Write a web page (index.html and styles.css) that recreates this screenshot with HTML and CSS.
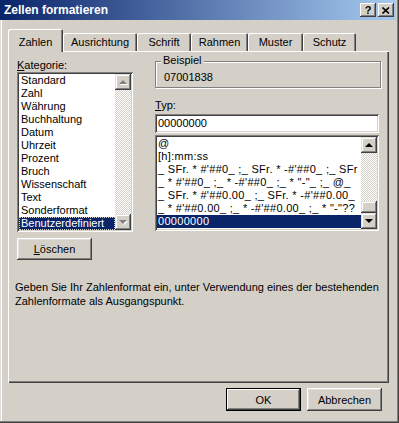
FILE: index.html
```html
<!DOCTYPE html>
<html lang="de">
<head>
    <meta charset="UTF-8">
    <title>Zellen formatieren</title>
    <link rel="stylesheet" href="styles.css">
</head>
<body>
    <div class="window">
        <!-- Title bar -->
        <div class="titlebar">
            <span class="title">Zellen formatieren</span>
            <div class="caption-buttons">
                <span class="caption-btn help">?</span>
                <span class="caption-btn close">
                    <svg width="8" height="7" viewBox="0 0 8 7"><path d="M0.5 0.5 L7 6.5 M7 0.5 L0.5 6.5" stroke="#000" stroke-width="1.6" fill="none"/></svg>
                </span>
            </div>
        </div>

        <!-- Tabs -->
        <div class="tabs">
            <div class="tab active tab-zahlen">Zahlen</div>
            <div class="tab tab-ausrichtung">Ausrichtung</div>
            <div class="tab tab-schrift">Schrift</div>
            <div class="tab tab-rahmen">Rahmen</div>
            <div class="tab tab-muster">Muster</div>
            <div class="tab tab-schutz">Schutz</div>
        </div>

        <div class="panel">
            <div class="panel-row">
                <div class="col-left">
                    <div class="label"><u>K</u>ategorie:</div>
                    <div class="listbox category">
                        <ul class="items">
                            <li>Standard</li>
                            <li>Zahl</li>
                            <li>Währung</li>
                            <li>Buchhaltung</li>
                            <li>Datum</li>
                            <li>Uhrzeit</li>
                            <li>Prozent</li>
                            <li>Bruch</li>
                            <li>Wissenschaft</li>
                            <li>Text</li>
                            <li>Sonderformat</li>
                            <li class="selected focused">Benutzerdefiniert</li>
                        </ul>
                        <div class="scrollbar disabled">
                            <div class="arrow up"></div>
                            <div class="track"></div>
                            <div class="arrow down"></div>
                        </div>
                    </div>
                    <div class="button clear"><span><u>L</u>öschen</span></div>
                </div>

                <div class="col-right">
                    <div class="group">
                        <div class="group-label">Beispiel</div>
                        <div class="sample">07001838</div>
                    </div>
                    <div class="label typ"><u>T</u>yp:</div>
                    <div class="textbox">00000000</div>
                    <div class="listbox formats">
                        <ul class="items">
                            <li>@</li>
                            <li>[h]:mm:ss</li>
                            <li>_ SFr. * #'##0_ ;_ SFr. * -#'##0_ ;_ SFr</li>
                            <li>_ * #'##0_ ;_ * -#'##0_ ;_ * "-"_ ;_ @_</li>
                            <li>_ SFr. * #'##0.00_ ;_ SFr. * -#'##0.00_</li>
                            <li>_ * #'##0.00_ ;_ * -#'##0.00_ ;_ * "-"??</li>
                            <li class="selected">00000000</li>
                        </ul>
                        <div class="scrollbar">
                            <div class="arrow up"></div>
                            <div class="track"></div>
                            <div class="thumb"></div>
                            <div class="arrow down"></div>
                        </div>
                    </div>
                </div>
            </div>

            <p class="hint">Geben Sie Ihr Zahlenformat ein, unter Verwendung eines der bestehenden<br>Zahlenformate als Ausgangspunkt.</p>
        </div>

        <!-- Dialog buttons -->
        <div class="actions">
            <div class="button default">OK</div>
            <div class="button">Abbrechen</div>
        </div>
    </div>
</body>
</html>
```

FILE: styles.css
```css
body {
    margin: 0;
    background-color: #d4d0c8;
    font-family: 'Liberation Sans', Arial, sans-serif;
    font-size: 11px;
    color: #000;
}
.window {
    width: 399px;
    height: 423px;
    box-sizing: border-box;
    padding: 0 3px 3px 0;
    background-color: #d4d0c8;
    box-shadow: inset -1px -1px #404040, inset -2px -2px #808080, inset 1px 0 #dfdfdf, inset 2px 0 #fff;
}

/* Title bar */
.titlebar {
    display: flex;
    align-items: center;
    justify-content: space-between;
    height: 20px;
    padding: 0 2px 0 4px;
    background: linear-gradient(to right, #0a246a, #a6caf0);
    color: #fff;
}
.title {
    font-weight: bold;
    font-size: 12px;
}
.caption-buttons {
    display: flex;
    gap: 2px;
}
.caption-btn {
    display: flex;
    align-items: center;
    justify-content: center;
    width: 16px;
    height: 14px;
    box-sizing: border-box;
    background-color: #d4d0c8;
    color: #000;
    font-weight: bold;
    font-size: 11px;
    box-shadow: inset -1px -1px #404040, inset 1px 1px #fff, inset -2px -2px #808080;
}

/* Tabs */
.tabs {
    display: flex;
    align-items: flex-end;
    height: 22px;
    margin: 9px 0 0 8px;
    position: relative;
    z-index: 1;
}
.tab {
    display: flex;
    align-items: flex-end;
    justify-content: center;
    height: 18px;
    padding-bottom: 2px;
    box-sizing: border-box;
    line-height: 13px;
    border-radius: 2px 2px 0 0;
    box-shadow: inset 1px 1px #fff, inset -1px 0 #404040, inset -2px 0 #808080;
}
.tab.active {
    height: 23px;
    margin-bottom: -1px;
    padding-bottom: 3px;
    background-color: #d4d0c8;
}
.tab-zahlen { width: 55px; }
.tab-ausrichtung { width: 74px; }
.tab-schrift { width: 54px; }
.tab-rahmen { width: 57px; }
.tab-muster { width: 55px; }
.tab-schutz { width: 53px; }

/* Tab page */
.panel {
    height: 332px;
    margin: 0 7px 0 8px;
    padding: 7px 0 0 9px;
    box-sizing: border-box;
    box-shadow: inset 1px 1px #fff, inset -1px -1px #404040, inset -2px -2px #808080;
}
.panel-row {
    display: flex;
    gap: 22px;
}
.col-left {
    width: 116px;
}
.col-right {
    width: 226px;
}
.label {
    line-height: 14px;
}
.label.typ {
    margin-top: 10px;
}

/* List boxes */
.listbox {
    display: flex;
    box-sizing: border-box;
    padding: 2px;
    background-color: #fff;
    box-shadow: inset 1px 1px #808080, inset -1px -1px #fff, inset 2px 2px #404040, inset -2px -2px #d4d0c8;
}
.listbox.category {
    height: 160px;
}
.listbox.formats {
    height: 96px;
    width: 224px;
    margin-top: 2px;
}
.items {
    flex: 1;
    margin: 0;
    padding: 0;
    list-style: none;
    overflow: hidden;
}
.items li {
    height: 13px;
    line-height: 13px;
    padding-left: 2px;
    white-space: nowrap;
}
.formats .items li {
    padding-left: 1px;
    letter-spacing: 0.3px;
}
.items li.selected {
    background-color: #0a246a;
    color: #fff;
}
.items li.focused {
    outline: 1px dotted #d4d0c8;
    outline-offset: -1px;
}

/* Scroll bars */
.scrollbar {
    display: flex;
    flex-direction: column;
    width: 16px;
}
.track {
    flex: 1;
    background-image: repeating-conic-gradient(#fff 0 25%, #d4d0c8 0 50%);
    background-size: 2px 2px;
}
.arrow,
.thumb {
    display: flex;
    align-items: center;
    justify-content: center;
    background-color: #d4d0c8;
    box-shadow: inset -1px -1px #404040, inset 1px 1px #dfdfdf, inset -2px -2px #808080, inset 2px 2px #fff;
}
.arrow {
    height: 16px;
}
.thumb {
    height: 12px;
}
.arrow::before {
    content: "";
    border-left: 4px solid transparent;
    border-right: 4px solid transparent;
}
.arrow.up::before {
    border-bottom: 4px solid #000;
    margin-top: -1px;
}
.arrow.down::before {
    border-top: 4px solid #000;
}
.disabled .arrow.up::before {
    border-bottom-color: #808080;
    filter: drop-shadow(1px 1px 0 #fff);
}
.disabled .arrow.down::before {
    border-top-color: #808080;
    filter: drop-shadow(1px 1px 0 #fff);
}

/* Sample group */
.group {
    height: 27px;
    margin-top: 3px;
    padding-left: 8px;
    box-sizing: border-box;
    border: 1px solid #808080;
    box-shadow: inset 1px 1px #fff, 1px 1px #fff;
}
.group-label {
    width: fit-content;
    margin: -8px 0 0 -3px;
    padding: 0 2px;
    line-height: 13px;
    background-color: #d4d0c8;
}
.sample {
    margin-top: 4px;
    line-height: 13px;
}
.textbox {
    height: 19px;
    width: 224px;
    margin-top: 2px;
    padding-left: 3px;
    box-sizing: border-box;
    line-height: 19px;
    background-color: #fff;
    box-shadow: inset 1px 1px #808080, inset -1px -1px #fff, inset 2px 2px #404040, inset -2px -2px #d4d0c8;
}

/* Buttons */
.button {
    display: flex;
    align-items: center;
    justify-content: center;
    width: 75px;
    height: 23px;
    box-sizing: border-box;
    background-color: #d4d0c8;
    box-shadow: inset -1px -1px #404040, inset 1px 1px #fff, inset -2px -2px #808080, inset 2px 2px #dfdfdf;
}
.button.clear {
    height: 22px;
    margin-top: 6px;
}
.button.default {
    border: 1px solid #000;
    box-shadow: inset -1px -1px #404040, inset 1px 1px #fff, inset -2px -2px #808080;
}
.hint {
    margin: 20px 0 0 -2px;
    line-height: 14px;
}
.actions {
    display: flex;
    justify-content: flex-end;
    gap: 6px;
    padding: 5px 14px 0 0;
}
```
